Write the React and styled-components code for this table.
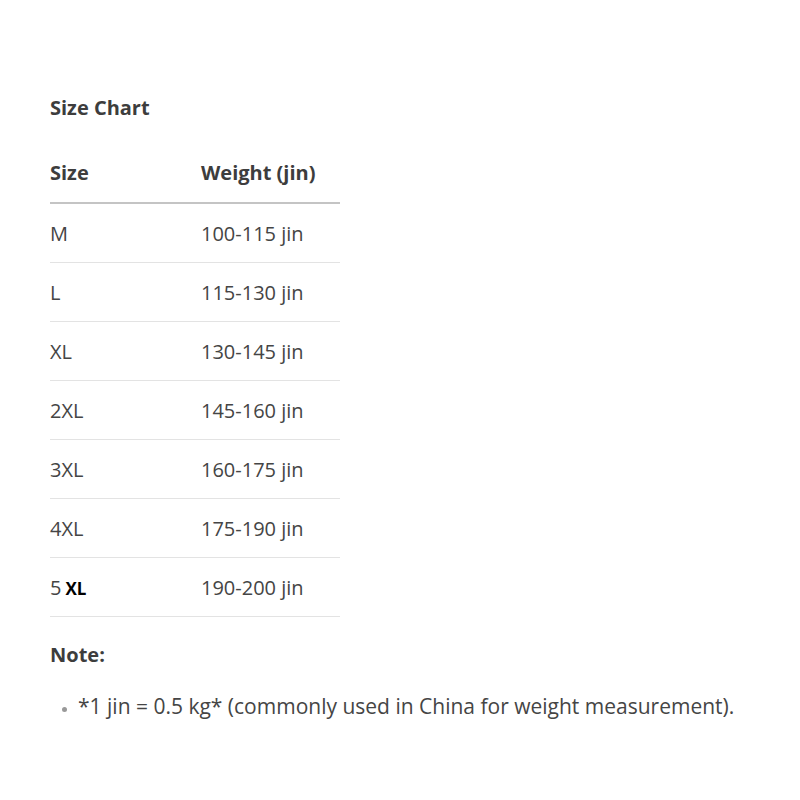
import React from "react";
import styled, { createGlobalStyle } from "styled-components";

const GlobalStyle = createGlobalStyle`
  html, body {
    margin: 0;
    padding: 0;
    background: #ffffff;
  }
  body {
    font-family: "Open Sans", "Noto Sans", sans-serif;
    color: #404040;
  }
`;

const rows = [
  ["M", "100-115 jin"],
  ["L", "115-130 jin"],
  ["XL", "130-145 jin"],
  ["2XL", "145-160 jin"],
  ["3XL", "160-175 jin"],
  ["4XL", "175-190 jin"],
  ["5", "190-200 jin", "XL"],
];

const Page = styled.main`
  padding: 94px 0 0 50px;
  width: 750px;
`;

const Title = styled.h2`
  margin: 0 0 20px;
  font-size: 20px;
  font-weight: 700;
  line-height: 28px;
  color: #3d3d3d;
`;

const Table = styled.table`
  border-collapse: collapse;
  width: 290px;
  font-size: 20px;
`;

const HeadCell = styled.th`
  text-align: left;
  font-weight: 700;
  font-size: 20px;
  color: #3d3d3d;
  height: 60px;
  padding: 0;
  vertical-align: middle;
  border-bottom: 2px solid #c4c4c4;
  width: ${(p) => p.$w || "auto"};
`;

const Cell = styled.td`
  padding: 0;
  height: 58px;
  vertical-align: middle;
  color: #454545;
  border-bottom: 1px solid #e3e3e3;
`;

const Bold = styled.b`
  color: #000;
  font-size: 17px;
  margin-left: 4px;
`;

const NoteTitle = styled.h3`
  margin: 24px 0 24px;
  font-size: 20px;
  font-weight: 700;
  color: #3d3d3d;
`;

const List = styled.ul`
  margin: 0;
  padding-left: 28px;
  font-size: 21px;
  color: #454545;

  li::marker {
    color: #999;
    font-size: 13px;
  }
`;

export default function App() {
  return (
    <>
      <GlobalStyle />
      <Page>
        <Title>Size Chart</Title>
        <Table>
          <thead>
            <tr>
              <HeadCell $w="151px">Size</HeadCell>
              <HeadCell>Weight (jin)</HeadCell>
            </tr>
          </thead>
          <tbody>
            {rows.map(([size, weight, extra]) => (
              <tr key={weight}>
                <Cell>
                  {size}
                  {extra && <Bold>{extra}</Bold>}
                </Cell>
                <Cell>{weight}</Cell>
              </tr>
            ))}
          </tbody>
        </Table>
        <NoteTitle>Note:</NoteTitle>
        <List>
          <li>*1 jin = 0.5 kg* (commonly used in China for weight measurement).</li>
        </List>
      </Page>
    </>
  );
}
